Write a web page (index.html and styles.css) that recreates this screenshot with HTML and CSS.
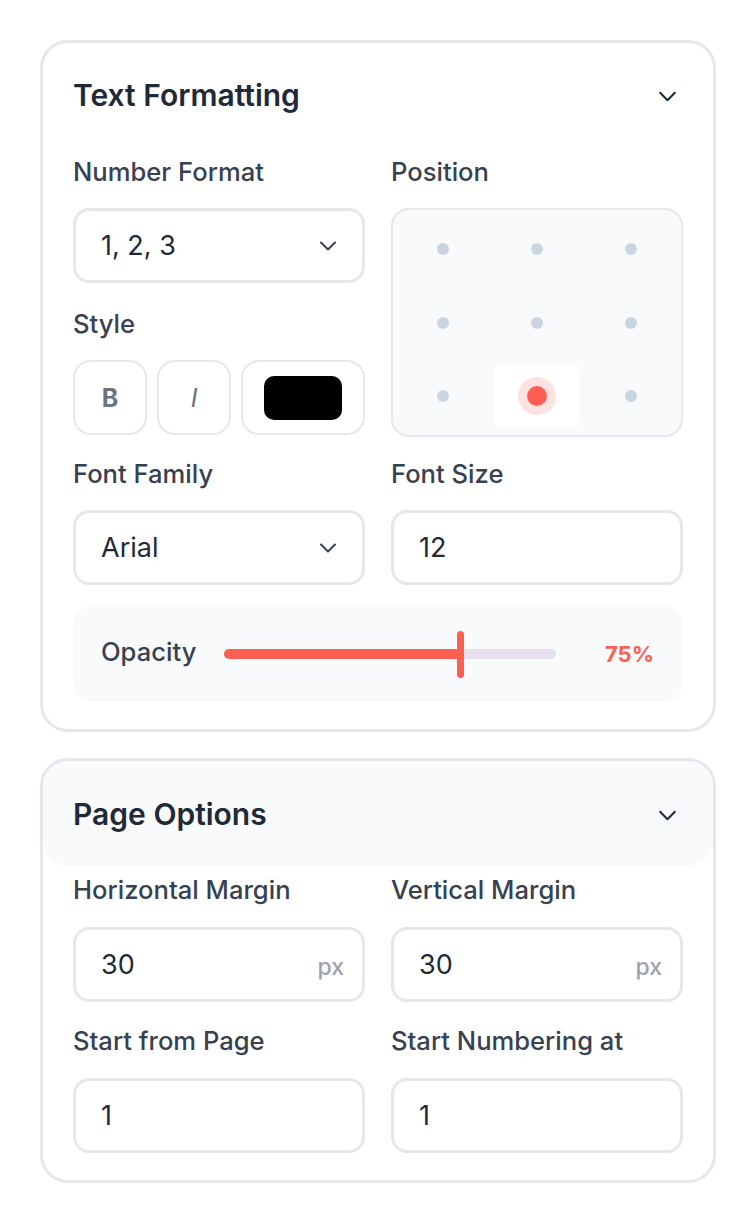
FILE: index.html
```html
<!DOCTYPE html>
<html>
<head>
<meta charset="utf-8">
<link rel="stylesheet" href="styles.css">
</head>
<body>
<div class="page">
  <section class="card">
    <div class="card-head">
      <h2 class="card-title">Text Formatting</h2>
      <svg class="chev-lg" viewBox="0 0 20 12" width="20" height="12"><path d="M2 2 L10 10 L18 2" fill="none" stroke="#1f2937" stroke-width="2.2" stroke-linecap="round" stroke-linejoin="round"/></svg>
    </div>
    <div class="card-body">
      <div class="grid2">
        <div class="col">
          <div class="field">
            <div class="label">Number Format</div>
            <div class="control select">
              <span class="val">1, 2, 3</span>
              <svg class="chev" viewBox="0 0 18 10" width="18" height="10"><path d="M2 1.5 L9 8.5 L16 1.5" fill="none" stroke="#374151" stroke-width="2" stroke-linecap="round" stroke-linejoin="round"/></svg>
            </div>
          </div>
          <div class="field style-field">
            <div class="label">Style</div>
            <div class="style-row">
              <div class="sbtn bold">B</div>
              <div class="sbtn ital">I</div>
              <div class="sbtn color"><span class="swatch"></span></div>
            </div>
          </div>
        </div>
        <div class="field">
          <div class="label">Position</div>
          <div class="posbox">
            <div class="cell"><span class="dot"></span></div>
            <div class="cell"><span class="dot"></span></div>
            <div class="cell"><span class="dot"></span></div>
            <div class="cell"><span class="dot"></span></div>
            <div class="cell"><span class="dot"></span></div>
            <div class="cell"><span class="dot"></span></div>
            <div class="cell"><span class="dot"></span></div>
            <div class="cell active"><span class="dot"></span></div>
            <div class="cell"><span class="dot"></span></div>
          </div>
        </div>
      </div>
      <div class="grid2 row-gap">
        <div class="field">
          <div class="label">Font Family</div>
          <div class="control select">
            <span class="val">Arial</span>
            <svg class="chev" viewBox="0 0 18 10" width="18" height="10"><path d="M2 1.5 L9 8.5 L16 1.5" fill="none" stroke="#374151" stroke-width="2" stroke-linecap="round" stroke-linejoin="round"/></svg>
          </div>
        </div>
        <div class="field">
          <div class="label">Font Size</div>
          <div class="control"><span class="val">12</span></div>
        </div>
      </div>
      <div class="opacity">
        <span class="op-label">Opacity</span>
        <div class="track">
          <div class="fill" style="width:71.5%"></div>
          <div class="thumb" style="left:71.5%"></div>
        </div>
        <span class="op-val">75%</span>
      </div>
    </div>
  </section>

  <section class="card">
    <div class="card-head shaded">
      <h2 class="card-title">Page Options</h2>
      <svg class="chev-lg" viewBox="0 0 20 12" width="20" height="12"><path d="M2 2 L10 10 L18 2" fill="none" stroke="#1f2937" stroke-width="2.2" stroke-linecap="round" stroke-linejoin="round"/></svg>
    </div>
    <div class="card-body body2">
      <div class="grid2">
        <div class="field">
          <div class="label">Horizontal Margin</div>
          <div class="control"><span class="val">30</span><span class="unit">px</span></div>
        </div>
        <div class="field">
          <div class="label">Vertical Margin</div>
          <div class="control"><span class="val">30</span><span class="unit">px</span></div>
        </div>
      </div>
      <div class="grid2 row-gap2">
        <div class="field">
          <div class="label">Start from Page</div>
          <div class="control"><span class="val">1</span></div>
        </div>
        <div class="field">
          <div class="label">Start Numbering at</div>
          <div class="control"><span class="val">1</span></div>
        </div>
      </div>
    </div>
  </section>
</div>
</body>
</html>
```
FILE: styles.css
```css
* { box-sizing: border-box; }
html, body { margin: 0; padding: 0; background: #ffffff; }
body { font-family: Inter, "Noto Sans", sans-serif; color: #1f2937; font-optical-sizing: none; font-variation-settings: "opsz" 14; }
.page { padding: 40px 40px 0 40px; display: flex; flex-direction: column; gap: 26px; width: 756px; }
.card { border: 3px solid #e5e7eb; border-radius: 28px; background: #fff; }
.card-head { height: 103px; padding: 0 36px 0 30px; display: flex; align-items: center; justify-content: space-between; border-radius: 25px; }
.card-head.shaded { background: #f8fafc; height: 105px; }
.card-title { margin: 0; font-size: 30px; font-weight: 600; color: #1f2937; line-height: 40px; }
.chev-lg { display: block; width: 19px; height: 11px; margin-top: 3px; }
.card-body { padding: 8px 30px 27px 30px; }
.card-body.body2 { padding-top: 6px; }
.grid2 { display: grid; grid-template-columns: 1fr 1fr; column-gap: 26px; }
.row-gap { margin-top: 19px; }
.row-gap2 { margin-top: 21px; }
.col { display: flex; flex-direction: column; }
.field { display: flex; flex-direction: column; }
.style-field { margin-top: 23px; }
.label { font-size: 25.6px; font-weight: 500; color: #374151; line-height: 36px; margin-bottom: 18px; white-space: nowrap; }
.body2 .label { margin-bottom: 19px; }
.control { height: 75px; border: 3px solid #e5e7eb; border-radius: 16px; display: flex; align-items: center; justify-content: space-between; padding: 0 18px 0 25px; background: #fff; }
.val { font-size: 27px; color: #1f2937; }
.unit { font-size: 23px; font-weight: 500; color: #9ca3af; margin-top: 4px; }
.chev { display: block; margin-right: 7px; }
.style-row { display: flex; gap: 10px; height: 75px; }
.sbtn { width: 74px; height: 75px; border: 2px solid #e5e7eb; border-radius: 18px; display: flex; align-items: center; justify-content: center; color: #6b7280; font-size: 25px; }
.sbtn.bold { font-weight: 700; }
.sbtn.ital { font-style: italic; font-weight: 400; }
.sbtn.color { flex: 1; width: auto; }
.swatch { width: 78px; height: 44px; background: #000; border-radius: 10px; }
.posbox { border: 2px solid #e5e7eb; border-radius: 18px; background: #f8fafc; padding: 7px; display: grid; grid-template-columns: repeat(3, 1fr); grid-template-rows: repeat(3, 64px); column-gap: 8px; row-gap: 9.5px; height: 229px; }
.cell { display: flex; align-items: center; justify-content: center; border-radius: 10px; }
.dot { width: 12px; height: 12px; border-radius: 50%; background: #cbd5e1; }
.cell.active { background: #ffffff; }
.cell.active .dot { width: 20px; height: 20px; background: #ff5f52; box-shadow: 0 0 0 9px #fee2e2; }
.opacity { margin-top: 20px; height: 97px; background: #f8fafc; border-radius: 20px; display: flex; align-items: center; padding: 0 29px 0 28px; }
.op-label { font-size: 25.6px; font-weight: 500; color: #374151; width: 123px; margin-top: -4px; }
.track { position: relative; width: 332px; height: 10px; border-radius: 5px; background: #e8e0ee; }
.fill { height: 10px; border-radius: 5px; background: #ff5f52; }
.thumb { position: absolute; top: -18px; width: 7px; height: 47px; margin-left: -4px; background: #ff5f52; border-radius: 4px; }
.op-val { flex: 1; text-align: right; font-size: 22px; font-weight: 700; color: #ff5f52; }
```
